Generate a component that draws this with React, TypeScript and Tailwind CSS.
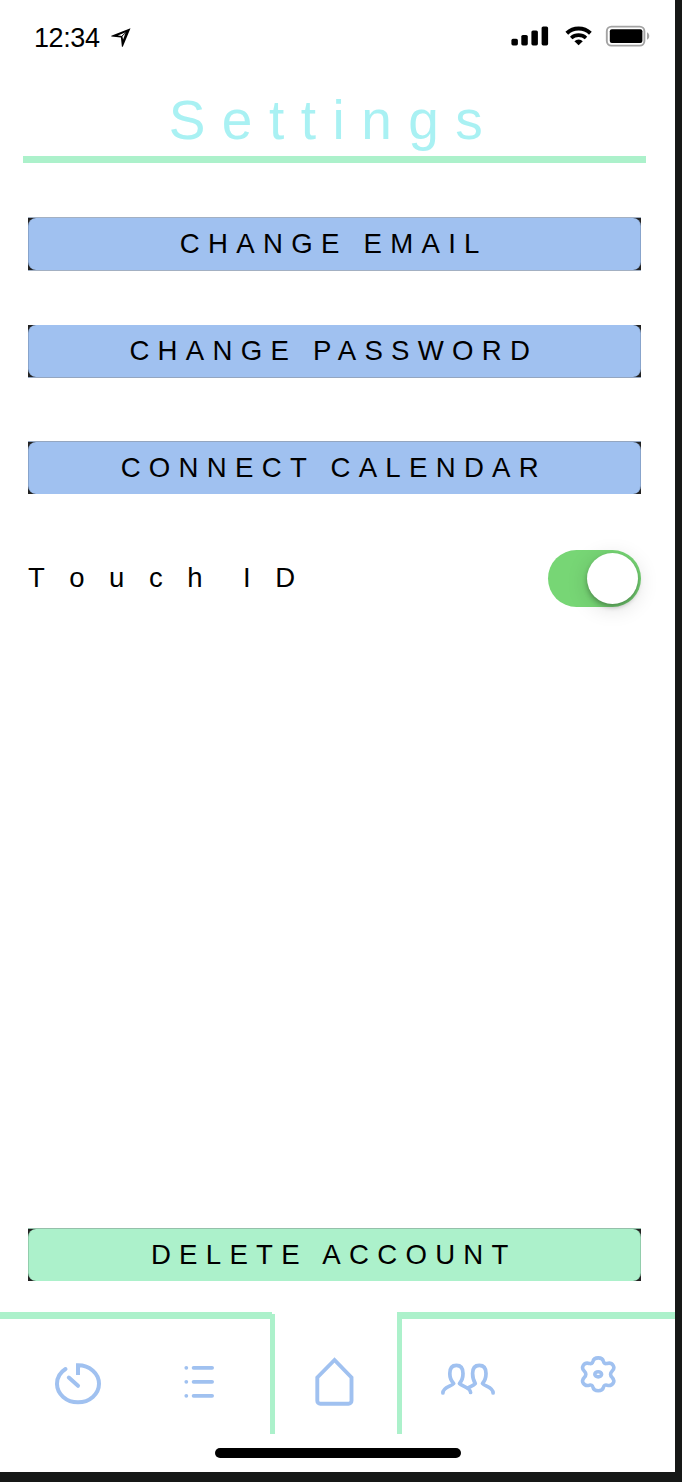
import React from "react";
import clsx from "clsx";

function StatusBar() {
  return (
    <header className="flex h-[72px] shrink-0 pl-[34px] pr-[24px]">
      <span className="mt-[23px] w-[65px] text-[27px] leading-[31px] tracking-[-0.4px]">12:34</span>
      <svg className="mt-[27px] ml-[12px]" width="20" height="20" viewBox="111 27 20 20">
        <path d="M111.300 35.800 130.500 28.200 122.800 46.800H121.900L120.900 37.600 111.300 36.500Z" />
        <path d="M117.800 35.600 125.800 32.300 123.100 39.500 122.300 35.900Z" fill="#fff" />
        <path d="M121.500 36.500 127 31.500" stroke="#000" strokeWidth="1" />
      </svg>
      <svg className="ml-auto mt-[25px]" width="38" height="22" viewBox="0 0 38 22">
        <rect x="0.4" y="13.8" width="6.500" height="6.600" rx="1.600" />
        <rect x="10.300" y="10" width="6.500" height="10.400" rx="1.600" />
        <rect x="20.400" y="5.400" width="6.500" height="15" rx="1.600" />
        <rect x="30.600" y="1.400" width="6.500" height="19" rx="1.600" />
      </svg>
      <svg className="mt-[25px] ml-[16px]" width="28" height="22" viewBox="0 0 28 22" fill="none">
        <path d="M1.800 8.200a17.300 17.300 0 0 1 23.600 0" stroke="#000" strokeWidth="4" />
        <path d="M6.200 13a11 11 0 0 1 14.800 0" stroke="#000" strokeWidth="3.600" />
        <path d="M9.400 16.200a6.300 6.300 0 0 1 8.400 0L13.600 20.300Z" fill="#000" />
      </svg>
      <svg className="mt-[25px] ml-[12px]" width="46" height="22" viewBox="-0.400 0 46 22">
        <rect x="1.400" y="1.600" width="37.600" height="19" rx="4.600" fill="none" stroke="#a3a3a3" strokeWidth="1.900" />
        <rect x="4.400" y="4.200" width="32.600" height="13.800" rx="2" />
        <path d="M41.600 7.300c3 1.400 3 6.200 0 7.400Z" fill="#a3a3a3" />
      </svg>
    </header>
  );
}

type ActionProps = { label: string; className: string };

function ActionButton({ label, className }: ActionProps) {
  return (
    <button className={clsx("block w-[613px] shrink-0 bg-[#222]", className)}>
      <span className="flex h-full w-full items-center justify-center rounded-[8px] border-x border-black/15 bg-[var(--face)] pr-[1.400px] pb-[1px] text-[27.600px] leading-none tracking-[0.3em] whitespace-nowrap">
        {label}
      </span>
    </button>
  );
}

function Toggle() {
  return (
    <div role="switch" aria-checked="true" className="flex h-[57px] w-[93px] items-center justify-end rounded-full bg-[#77d675] pr-[3px]">
      <div className="size-[51px] rounded-full bg-white shadow-[0_3px_5px_rgba(0,0,0,0.28),0_4px_22px_rgba(0,0,0,0.14)]" />
    </div>
  );
}

function NavBar() {
  return (
    <nav className="flex h-[122px] shrink-0 text-[#a0c1f0]">
      <div className="flex w-[270px]">
        <div className="flex w-full border-t-[7px] border-[#acf1cb]">
          <svg className="mt-[43px] ml-[54px]" width="48" height="44" viewBox="54 1362 48 44" fill="none" stroke="currentColor" strokeWidth="4">
            <path d="M78 1375v-9.700c11.800 0 21 8.200 21 18.500s-9.400 18.500-21 18.500-21-8.200-21-18.500" />
            <path d="M65.500 1369c-5.300 3.300-8.500 8.800-8.500 14.800M68.800 1377.600l9.200 8.200" strokeLinecap="round" />
          </svg>
          <svg className="mt-[43px] ml-[80px]" width="34" height="40" viewBox="182 1362 34 40" fill="none" stroke="currentColor" strokeWidth="3.800" strokeLinecap="round">
            <path d="M186.300 1367.800h.01M186.300 1381.800h.01M186.300 1395.800h.01M193.600 1367.800h18.500M193.600 1381.800h18.500M193.600 1395.800h18.500" />
          </svg>
        </div>
      </div>
      <div className="flex w-[132px]">
        <div className="flex w-[5px] flex-col">
          <div className="h-[2px] w-[2px] bg-[#acf1cb]" />
          <div className="grow bg-[#acf1cb]" />
        </div>
        <div className="flex grow justify-center">
          <svg className="mt-[44px] mr-[4px]" width="42" height="52" viewBox="313 1356 42 52" fill="none" stroke="currentColor" strokeWidth="3.900">
            <path d="M334.500 1360l-17.200 17.500v23.200a3 3 0 0 0 3 3h28.200a3 3 0 0 0 3-3v-23.200Z" />
          </svg>
        </div>
        <div className="w-[5px] bg-[#acf1cb]" />
      </div>
      <div className="flex w-[273px] border-t-[7px] border-[#acf1cb]">
        <svg className="mt-[41px] ml-[37px]" width="58" height="38" viewBox="439 1360 58 38" fill="none" stroke="currentColor" strokeWidth="3.700" strokeLinecap="round" strokeLinejoin="round">
          <path d="M442.900 1393C442.900 1387 451.500 1386.500 453.700 1383.500C451 1380.800 449.800 1377.200 449.800 1373.500C449.800 1368 452 1365.400 456.400 1365.400S463 1368 463 1373.500C463 1377.200 462 1380.800 459.500 1383.500C462 1386.600 470.600 1387.200 470.600 1392.500" />
          <path d="M468 1388C470.700 1386.400 473.500 1385.500 475.300 1383.500C473.400 1380.500 472.600 1377.200 472.600 1373.500C472.600 1368 474.800 1365.400 479.300 1365.400S486 1368 486 1373.500C486 1377.200 484.900 1380.800 482.500 1383.500C484.700 1386.500 493.100 1387 493.100 1393" />
        </svg>
        <svg className="mt-[34px] ml-[82px]" width="38" height="42" viewBox="578.800 1353 38 42" fill="none" stroke="currentColor" strokeWidth="3.600" strokeLinejoin="round">
          <path d="M592.800 1361.200C593.800 1356.700 602.200 1356.700 603.200 1361.200C603.800 1363.400 605 1364 607 1363.400C612.500 1362 615.600 1367.600 612 1371C609.800 1373.200 609.800 1375.400 612 1377.600C615.600 1381 612.500 1386.600 607 1385.200C605 1384.600 603.800 1385.200 603.200 1387.400C602.200 1391.900 593.800 1391.900 592.800 1387.400C592.200 1385.200 591 1384.600 589 1385.200C583.500 1386.600 580.400 1381 584 1377.600C586.200 1375.400 586.200 1373.200 584 1371C580.400 1367.600 583.500 1362 589 1363.400C591 1364 592.200 1363.400 592.800 1361.200Z" />
          <ellipse cx="598" cy="1374.300" rx="3.400" ry="2.600" />
        </svg>
      </div>
    </nav>
  );
}

export default function App() {
  return (
    <div className="h-[1482px] w-[682px] bg-[#161817] pr-[7px] pb-[10px] font-['Liberation_Sans',Arial,sans-serif] text-black">
      <div className="flex h-[1472px] w-[675px] flex-col overflow-hidden bg-white">
        <StatusBar />
        <h1 className="mr-[29px] ml-[23px] flex h-[91px] shrink-0 justify-center border-b-[7px] border-[#acf1cb] pt-[16px] pr-[1px] text-[55px] leading-[64px] tracking-[0.3em] text-[#a9f1f3]">
          Settings
        </h1>
        <main className="flex h-[1149px] shrink-0 flex-col pl-[28px]">
          <ActionButton label="CHANGE EMAIL" className="mt-[54px] h-[54px] border-y border-[#a3b0c2] [--face:#a0c1f0]" />
          <ActionButton label="CHANGE PASSWORD" className="mt-[54px] h-[53px] border-b border-[#94a6c0] [--face:#a0c1f0]" />
          <ActionButton label="CONNECT CALENDAR" className="mt-[63px] h-[53px] border-t border-[#94a6c0] [--face:#a0c1f0]" />
          <div className="mt-[56px] flex w-[613px] shrink-0 items-center justify-between">
            <span className="pb-[2px] text-[27.500px] leading-[31px] tracking-[24.500px] [font-kerning:none] [word-spacing:-16px]">Touch ID</span>
            <Toggle />
          </div>
          <ActionButton label="DELETE ACCOUNT" className="mt-auto mb-[31px] h-[53px] border-t border-[#95bfaa] [--face:#acf1cb]" />
        </main>
        <NavBar />
        <div className="mt-[14px] ml-[215px] h-[9.500px] w-[246px] rounded-full bg-black" />
      </div>
    </div>
  );
}
